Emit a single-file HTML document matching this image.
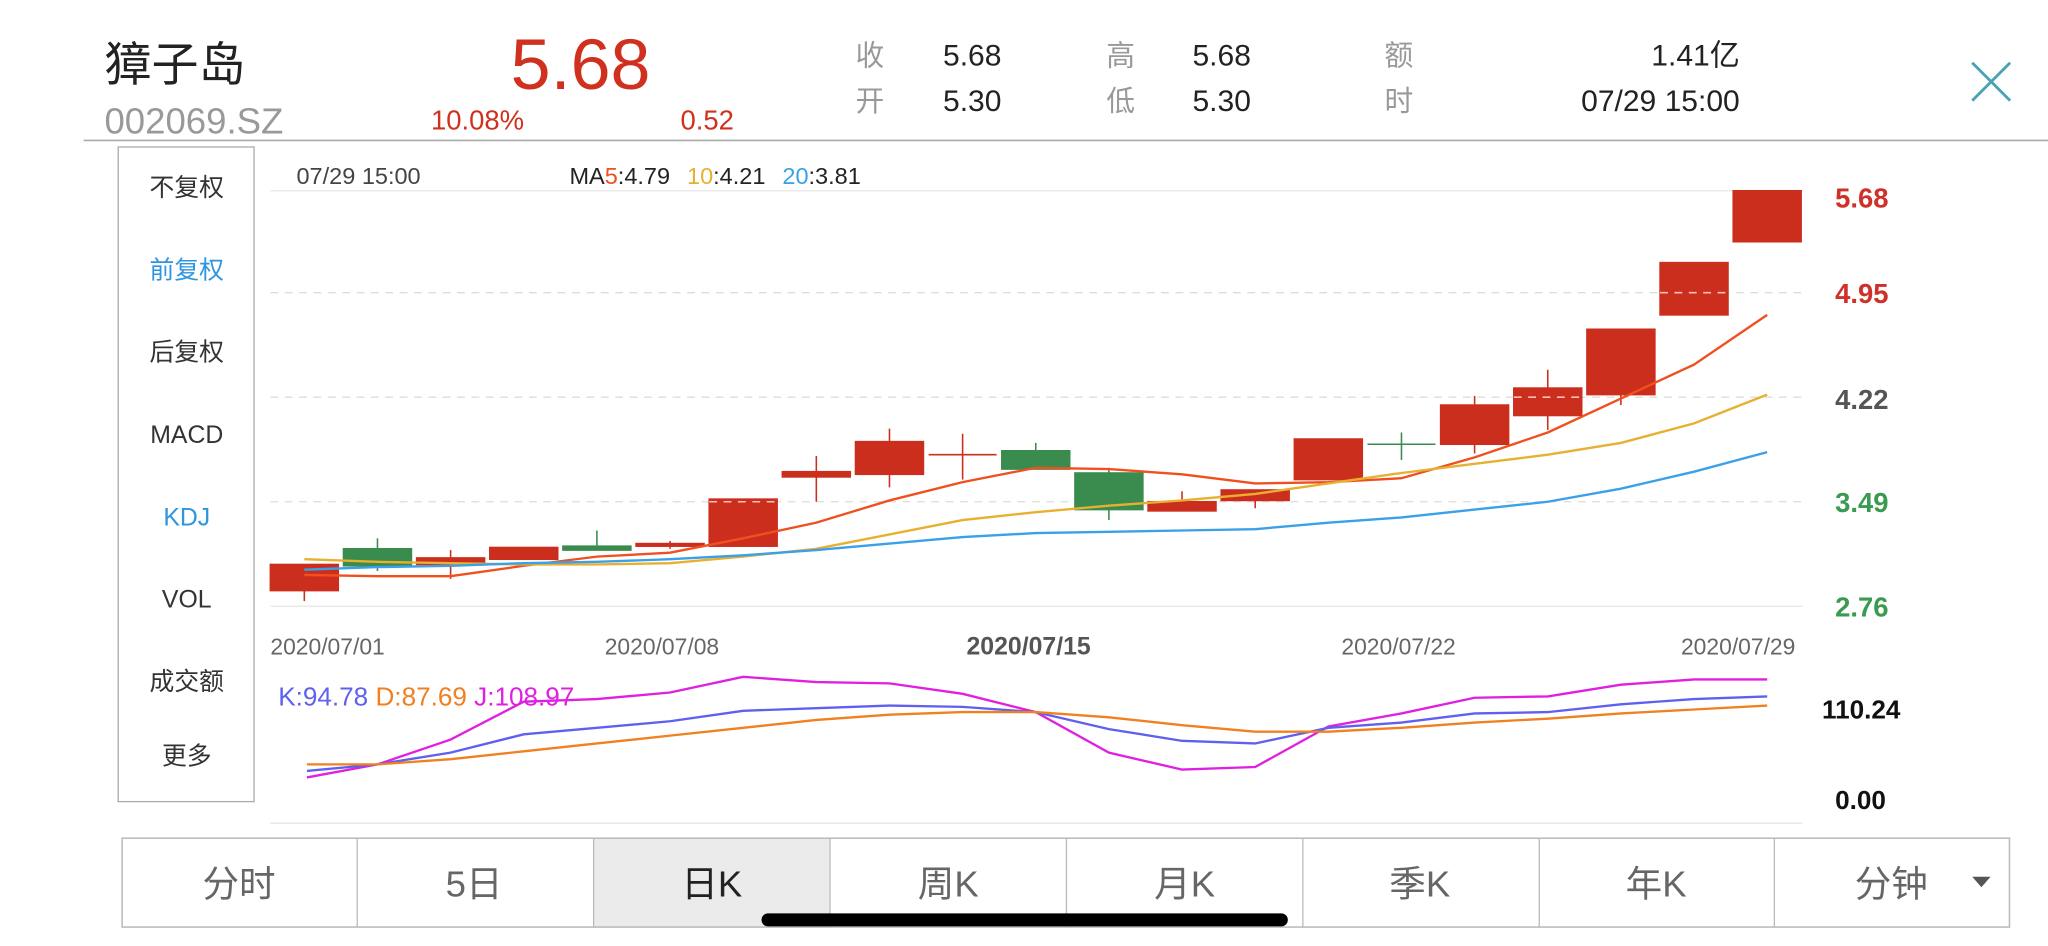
<!DOCTYPE html>
<html><head><meta charset="utf-8"><style>
html,body{margin:0;padding:0;background:#fff;width:2048px;height:946px;overflow:hidden}
svg{display:block}
text{font-family:"Liberation Sans","Noto Sans CJK SC",sans-serif}
</style></head><body>
<svg width="2048" height="946" viewBox="0 0 1568 724" preserveAspectRatio="none" xmlns="http://www.w3.org/2000/svg">
<rect width="1568" height="724" fill="#fff"/>
<!-- header -->
<text x="80" y="62" font-size="36" fill="#222">獐子岛</text>
<text x="80" y="102" font-size="28" fill="#999">002069.SZ</text>
<text x="391" y="68" font-size="55" fill="#d0301e">5.68</text>
<text x="330" y="99" font-size="21" fill="#d0301e">10.08%</text>
<text x="521" y="99" font-size="21" fill="#d0301e">0.52</text>
<g font-size="22" fill="#999">
<text x="655" y="50">收</text><text x="655" y="85">开</text>
<text x="847" y="50">高</text><text x="847" y="85">低</text>
<text x="1060" y="50">额</text><text x="1060" y="85">时</text>
</g>
<g font-size="23" fill="#222">
<text x="722" y="50">5.68</text><text x="722" y="85">5.30</text>
<text x="913" y="50">5.68</text><text x="913" y="85">5.30</text>
<text x="1332" y="50" text-anchor="end">1.41亿</text><text x="1332" y="85" text-anchor="end">07/29 15:00</text>
</g>
<path d="M1510 48L1539 77M1539 48L1510 77" stroke="#4aa3b5" stroke-width="2.2"/>
<line x1="64" y1="107.5" x2="1568" y2="107.5" stroke="#aaa" stroke-width="1.2"/>
<!-- left panel -->
<rect x="90.5" y="112.5" width="104" height="501" fill="#fff" stroke="#aaa" stroke-width="1"/>
<g font-size="19" text-anchor="middle" fill="#333">
<text x="143" y="150">不复权</text>
<text x="143" y="213" fill="#2e95e0">前复权</text>
<text x="143" y="276">后复权</text>
<text x="143" y="339">MACD</text>
<text x="143" y="402" fill="#2e95e0">KDJ</text>
<text x="143" y="465">VOL</text>
<text x="143" y="528">成交额</text>
<text x="143" y="585">更多</text>
</g>
<!-- chart grid -->
<g stroke="#e6e6e6" stroke-width="1">
<line x1="207" y1="146" x2="1380" y2="146"/>
<line x1="207" y1="464" x2="1380" y2="464"/>
<line x1="207" y1="630" x2="1380" y2="630"/>
<g stroke-dasharray="6,5" stroke="#ddd"><line x1="207" y1="224" x2="1380" y2="224"/><line x1="207" y1="304" x2="1380" y2="304"/><line x1="207" y1="384" x2="1380" y2="384"/></g>
</g>
<g font-size="18" fill="#444">
<text x="227" y="141">07/29 15:00</text>
<text x="436" y="141" fill="#222">MA<tspan fill="#f0501e">5</tspan>:4.79 <tspan dx="8" fill="#e8b030">10</tspan>:4.21 <tspan dx="8" fill="#3aa0e8">20</tspan>:3.81</text>
</g>
<g font-size="21" font-weight="bold">
<text x="1405" y="159" fill="#d0302a">5.68</text>
<text x="1405" y="232" fill="#d0302a">4.95</text>
<text x="1405" y="313" fill="#555">4.22</text>
<text x="1405" y="392" fill="#3a9a50">3.49</text>
<text x="1405" y="472" fill="#3a9a50">2.76</text>
<text x="1395" y="550" font-size="20" fill="#111">110.24</text>
<text x="1405" y="619" font-size="20" fill="#111">0.00</text>
</g>
<g font-size="17.5" fill="#666">
<text x="207" y="501">2020/07/01</text>
<text x="463" y="501">2020/07/08</text>
<text x="740" y="501" font-size="19" font-weight="bold" fill="#555">2020/07/15</text>
<text x="1027" y="501">2020/07/22</text>
<text x="1287" y="501">2020/07/29</text>
</g>
<!-- candles -->
<g stroke-width="1.2">
<g fill="#cc2e1e" stroke="#cc2e1e">
<line x1="233" y1="432" x2="233" y2="460"/><rect x="207" y="432" width="52" height="20"/>
<line x1="345" y1="421" x2="345" y2="443"/><rect x="319" y="427" width="52" height="5"/>
<rect x="375" y="419" width="52" height="9"/>
<line x1="513" y1="414" x2="513" y2="420"/><rect x="487" y="416" width="52" height="2"/>
<rect x="543" y="382" width="52" height="36"/>
<line x1="625" y1="349" x2="625" y2="384"/><rect x="599" y="361" width="52" height="4"/>
<line x1="681" y1="328" x2="681" y2="373"/><rect x="655" y="338" width="52" height="25"/>
<line x1="737" y1="332" x2="737" y2="367"/><line x1="711" y1="348" x2="763" y2="348"/>
<line x1="905" y1="376" x2="905" y2="391"/><rect x="879" y="384" width="52" height="7"/>
<line x1="961" y1="375" x2="961" y2="389"/><rect x="935" y="375" width="52" height="8"/>
<rect x="991" y="336" width="52" height="31"/>
<line x1="1129" y1="303" x2="1129" y2="347"/><rect x="1103" y="310" width="52" height="30"/>
<line x1="1185" y1="283" x2="1185" y2="329"/><rect x="1159" y="297" width="52" height="21"/>
<line x1="1241" y1="300" x2="1241" y2="310"/><rect x="1215" y="252" width="52" height="50"/>
<rect x="1271" y="201" width="52" height="40"/>
<rect x="1327" y="146" width="52" height="39"/>
</g>
<g fill="#3a8c4e" stroke="#3a8c4e">
<line x1="289" y1="412" x2="289" y2="437"/><rect x="263" y="420" width="52" height="13"/>
<line x1="457" y1="406" x2="457" y2="421"/><rect x="431" y="418" width="52" height="3"/>
<line x1="793" y1="339" x2="793" y2="359"/><rect x="767" y="345" width="52" height="14"/>
<line x1="849" y1="358" x2="849" y2="398"/><rect x="823" y="362" width="52" height="28"/>
<line x1="1073" y1="331" x2="1073" y2="352"/><line x1="1047" y1="340" x2="1099" y2="340"/>
</g>
<g stroke="#f4c0b8" stroke-dasharray="6,5"><line x1="543" y1="384" x2="595" y2="384"/><line x1="1159" y1="304" x2="1211" y2="304"/><line x1="1271" y1="224" x2="1323" y2="224"/></g>
</g>
<!-- MAs -->
<g fill="none" stroke-width="1.8">
<polyline stroke="#f0501e" points="233,440 289,441 345,441 401,433 457,426 513,423 569,412 625,400 681,383 737,369 793,358 849,359 905,363 961,370 1017,369 1073,366 1129,350 1185,331 1241,305 1297,279 1353,241"/>
<polyline stroke="#e8b030" points="233,428 289,430 345,431 401,432 457,432 513,431 569,426 625,420 681,409 737,398 793,392 849,387 905,383 961,378 1017,370 1073,362 1129,355 1185,348 1241,339 1297,324 1353,302"/>
<polyline stroke="#3aa0e8" points="233,436 289,434 345,433 401,431 457,430 513,428 569,425 625,421 681,416 737,411 793,408 849,407 905,406 961,405 1017,400 1073,396 1129,390 1185,384 1241,374 1297,361 1353,346"/>
</g>
<!-- KDJ -->
<text x="213" y="540" font-size="20"><tspan fill="#6060f0">K:94.78</tspan> <tspan fill="#f08020">D:87.69</tspan> <tspan fill="#e020e0">J:108.97</tspan></text>
<g fill="none" stroke-width="1.8">
<polyline stroke="#e020e0" points="235,595 289,585 345,566 401,537 457,535 513,530 569,518 625,522 681,523 737,531 793,545 849,576 905,589 961,587 1017,556 1073,546 1129,534 1185,533 1241,524 1297,520 1353,520"/>
<polyline stroke="#6060f0" points="235,590 289,585 345,576 401,562 457,557 513,552 569,544 625,542 681,540 737,541 793,545 849,558 905,567 961,569 1017,557 1073,553 1129,546 1185,545 1241,539 1297,535 1353,533"/>
<polyline stroke="#f08020" points="235,585 289,585 345,581 401,575 457,569 513,563 569,557 625,551 681,547 737,545 793,545 849,549 905,555 961,560 1017,560 1073,557 1129,553 1185,550 1241,546 1297,543 1353,540"/>
</g>
<!-- tabs -->
<rect x="454" y="642" width="181" height="68" fill="#ebebeb"/>
<rect x="93.5" y="641.5" width="1445" height="68" fill="none" stroke="#bbb" stroke-width="1.2"/>
<g stroke="#bbb" stroke-width="1"><line x1="273.5" y1="642" x2="273.5" y2="710"/><line x1="454.5" y1="642" x2="454.5" y2="710"/><line x1="635.5" y1="642" x2="635.5" y2="710"/><line x1="816.5" y1="642" x2="816.5" y2="710"/><line x1="997.5" y1="642" x2="997.5" y2="710"/><line x1="1178.5" y1="642" x2="1178.5" y2="710"/><line x1="1358.5" y1="642" x2="1358.5" y2="710"/></g>
<g font-size="28" fill="#666" text-anchor="middle">
<text x="183" y="686">分时</text><text x="363" y="686">5日</text><text x="545" y="686" fill="#222">日K</text><text x="726" y="686">周K</text><text x="907" y="686">月K</text><text x="1087" y="686">季K</text><text x="1268" y="686">年K</text><text x="1448" y="686">分钟</text>
</g>
<path d="M1510 671L1524 671L1517 679Z" fill="#555"/>
<rect x="583" y="699" width="403" height="10" rx="5" fill="#000"/>
</svg>
</body></html>
